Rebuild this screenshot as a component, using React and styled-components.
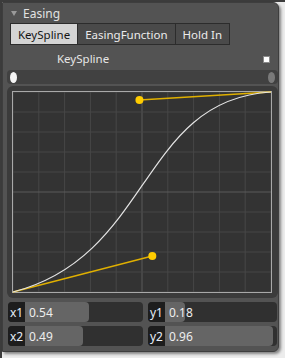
import styled, {createGlobalStyle} from 'styled-components';

const GlobalStyle = createGlobalStyle`
    html, body {
        margin: 0;
        padding: 0;
        background: #ececec;
    }
    body {
        font-family: "Noto Sans", "Liberation Sans", sans-serif;
        font-size: 11.5px;
    }
`

const fields = [
    {label: 'x1', value: 0.54},
    {label: 'y1', value: 0.18},
    {label: 'x2', value: 0.49},
    {label: 'y2', value: 0.96},
]

const tabs = ['KeySpline', 'EasingFunction', 'Hold In']

const W = 258
const H = 200
const cols = Array.from({length: 11}, (_, i) => 1 + i * W / 10)
const rows = Array.from({length: 11}, (_, i) => 1 + i * H / 10)

const px = (v) => 1 + v * W
const py = (v) => 1 + H - v * H

export default function App() {
    const [x1, y1, x2, y2] = fields.map(f => f.value)

    return (
        <>
            <GlobalStyle />
            <Frame>
                <Panel>
                    <Header>
                        <Arrow />
                        <Title>Easing</Title>
                    </Header>
                    <Tabs>
                        {tabs.map((t, i) => (
                            <Tab key={t} $active={i === 0}>{t}</Tab>
                        ))}
                    </Tabs>
                    <LabelRow>
                        <SplineLabel>KeySpline</SplineLabel>
                        <Check />
                    </LabelRow>
                    <Slider>
                        <Handle />
                        <Handle $dim />
                    </Slider>
                    <GraphBox>
                        <svg width="260" height="202" viewBox="0 0 260 202">
                            <rect x="0" y="0" width="260" height="202" fill="#333333" />
                            {cols.map((x, i) => (
                                <line key={'c' + i} x1={x} y1="1" x2={x} y2="201"
                                    stroke={i === 5 ? '#5a5a5a' : '#474747'} strokeWidth="1" />
                            ))}
                            {rows.map((y, i) => (
                                <line key={'r' + i} x1="1" y1={y} x2="259" y2={y}
                                    stroke={i === 5 ? '#5a5a5a' : '#474747'} strokeWidth="1" />
                            ))}
                            <rect x="0.5" y="0.5" width="259" height="201" fill="none" stroke="#a9a9a9" strokeWidth="1" />
                            <line x1={px(0)} y1={py(0)} x2={px(x1)} y2={py(y1)} stroke="#e0b000" strokeWidth="1.3" />
                            <line x1={px(1)} y1={py(1)} x2={px(x2)} y2={py(y2)} stroke="#e0b000" strokeWidth="1.3" />
                            <path
                                d={`M ${px(0)} ${py(0)} C ${px(x1)} ${py(y1)}, ${px(x2)} ${py(y2)}, ${px(1)} ${py(1)}`}
                                fill="none" stroke="#e4e4e4" strokeWidth="1.2" />
                            <circle cx={px(x1)} cy={py(y1)} r="4" fill="#ffcc00" />
                            <circle cx={px(x2)} cy={py(y2)} r="4" fill="#ffcc00" />
                        </svg>
                    </GraphBox>
                    <Fields>
                        {fields.map(f => (
                            <Field key={f.label}>
                                <FieldLabel>{f.label}</FieldLabel>
                                <Track>
                                    <Fill style={{width: `${f.value * 100}%`}}>
                                        {f.value.toFixed(2)}
                                    </Fill>
                                </Track>
                            </Field>
                        ))}
                    </Fields>
                </Panel>
            </Frame>
        </>
    )
}

const Frame = styled.div`
    width: 285px;
    height: 358px;
    box-sizing: border-box;
    padding: 2px 6px 6px 2px;
    background: linear-gradient(to right, #3c3c3c 0, #3c3c3c 2px, transparent 2px),
                linear-gradient(to bottom, #3c3c3c 0, #3c3c3c 2px, #ececec 2px);
`

const Panel = styled.div`
    width: 277px;
    height: 350px;
    box-sizing: border-box;
    background: #535353;
    border: 1px solid #3e3e3e;
    border-radius: 0 6px 6px 0;
    box-shadow: 2px 2px 3px rgba(0, 0, 0, 0.45);
    display: flex;
    flex-direction: column;
    padding: 0 3px 0 2px;
`

const Header = styled.div`
    height: 20px;
    display: flex;
    align-items: center;
    padding-left: 6px;
    gap: 6px;
`

const Arrow = styled.div`
    width: 0;
    height: 0;
    border-left: 3.5px solid transparent;
    border-right: 3.5px solid transparent;
    border-top: 5px solid #9a9a9a;
    margin-top: 1px;
`

const Title = styled.span`
    color: #e2e2e2;
    font-size: 12px;
`

const Tabs = styled.div`
    display: flex;
    margin-left: 5px;
    height: 22px;
`

const Tab = styled.div`
    display: flex;
    align-items: center;
    padding: 0 7px;
    box-sizing: border-box;
    border: 1px solid #2c2c2c;
    margin-left: -1px;
    background: ${p => p.$active ? '#d4d4d4' : '#4a4a4a'};
    color: ${p => p.$active ? '#151515' : '#ececec'};
    &:first-child {
        margin-left: 0;
    }
`

const LabelRow = styled.div`
    height: 25px;
    display: flex;
    align-items: center;
    justify-content: space-between;
    padding: 0 5px 0 52px;
`

const SplineLabel = styled.span`
    color: #e6e6e6;
    margin-top: 2px;
`

const Check = styled.div`
    width: 5px;
    height: 5px;
    background: #ffffff;
    border: 1px solid #8a8a8a;
    margin-top: 3px;
`

const Slider = styled.div`
    height: 14px;
    margin: 0 0 2px 2px;
    width: 271px;
    background: #414141;
    border-radius: 4px;
    display: flex;
    align-items: center;
    justify-content: space-between;
    padding: 0 3px;
    box-sizing: border-box;
`

const Handle = styled.div`
    width: 7px;
    height: 11px;
    border-radius: 50%;
    background: ${p => p.$dim ? '#7a7a7a' : '#f4f4f4'};
`

const GraphBox = styled.div`
    margin-left: 2px;
    width: 271px;
    height: 212px;
    box-sizing: border-box;
    padding: 5px 0 0 5px;
    background: #3b3b3b;
    border-radius: 6px;
    svg {
        display: block;
    }
`

const Fields = styled.div`
    display: grid;
    grid-template-columns: 135px 129px;
    column-gap: 5px;
    row-gap: 4px;
    margin: 4px 0 0 3px;
`

const Field = styled.div`
    height: 20px;
    display: flex;
    background: #303030;
    border-radius: 4px;
    overflow: hidden;
`

const FieldLabel = styled.div`
    width: 17px;
    flex: none;
    display: flex;
    align-items: center;
    justify-content: center;
    background: #1d1d1d;
    color: #e8eef8;
    font-size: 12px;
`

const Track = styled.div`
    flex: 1;
    display: flex;
`

const Fill = styled.div`
    background: #656565;
    border-radius: 0 4px 4px 0;
    display: flex;
    align-items: center;
    padding-left: 4px;
    box-sizing: border-box;
    white-space: nowrap;
    color: #eeeeee;
    font-size: 12px;
`
